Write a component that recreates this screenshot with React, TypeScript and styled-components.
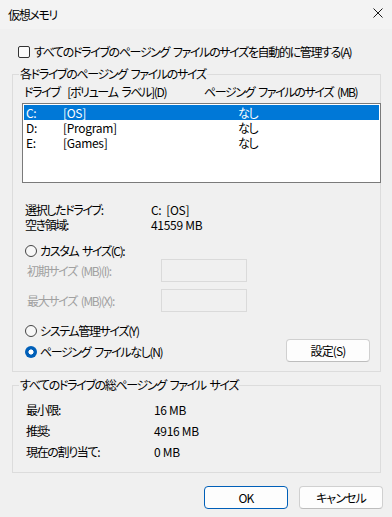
import React from "react"
import styled, { createGlobalStyle } from "styled-components"

const GlobalStyle = createGlobalStyle`
  html, body {
    margin: 0;
    padding: 0;
    background: #f0f0f0;
  }
  body {
    font-family: "Noto Sans CJK JP", "Noto Sans", sans-serif;
    font-size: 12px;
    color: #000;
  }
`

const drives = [
  { letter: "C:", label: "[OS]", size: "なし", selected: true },
  { letter: "D:", label: "[Program]", size: "なし", selected: false },
  { letter: "E:", label: "[Games]", size: "なし", selected: false },
]

const totals = [
  { label: "最小限:", value: "16 MB" },
  { label: "推奨:", value: "4916 MB" },
  { label: "現在の割り当て:", value: "0 MB" },
]

const CloseIcon = () => (
  <svg width="10" height="10" viewBox="0 0 10 10">
    <path d="M0.5 0.5 L9.5 9.5 M9.5 0.5 L0.5 9.5" stroke="#1a1a1a" strokeWidth="1" />
  </svg>
)

const App = () => {
  return (
    <Window>
      <GlobalStyle />
      <TitleBar>
        <Title>仮想メモリ</Title>
        <CloseButton>
          <CloseIcon />
        </CloseButton>
      </TitleBar>

      <Body>
        <CheckRow>
          <CheckBox />
          <span>すべてのドライブのページング ファイルのサイズを自動的に管理する(A)</span>
        </CheckRow>

        <Group>
          <Legend>各ドライブのページング ファイルのサイズ</Legend>
          <HeaderRow>
            <span>ドライブ&nbsp; [ボリューム ラベル](D)</span>
            <span>ページング ファイルのサイズ (MB)</span>
          </HeaderRow>
          <ListBox>
            {drives.map((d) => (
              <ListRow key={d.letter} $selected={d.selected}>
                <Latin>{d.letter}</Latin>
                <Latin>{d.label}</Latin>
                <span>{d.size}</span>
              </ListRow>
            ))}
          </ListBox>

          <InfoBlock>
            <InfoRow>
              <span>選択したドライブ:</span>
              <Latin>C:&nbsp; [OS]</Latin>
            </InfoRow>
            <InfoRow>
              <span>空き領域:</span>
              <Latin>41559 MB</Latin>
            </InfoRow>
          </InfoBlock>

          <RadioRow $top={11}>
            <Radio />
            <span>カスタム サイズ(C):</span>
          </RadioRow>
          <SizeRow $top={0}>
            <DisabledLabel>初期サイズ (MB)(I):</DisabledLabel>
            <SizeInput />
          </SizeRow>
          <SizeRow $top={7}>
            <DisabledLabel>最大サイズ (MB)(X):</DisabledLabel>
            <SizeInput />
          </SizeRow>

          <RadioRow $top={11}>
            <Radio />
            <span>システム管理サイズ(Y)</span>
          </RadioRow>
          <BottomRow>
            <RadioRow $top={2}>
              <Radio $checked />
              <span>ページング ファイルなし(N)</span>
            </RadioRow>
            <Button>設定(S)</Button>
          </BottomRow>
        </Group>

        <Group $top={5} $bottom={10}>
          <Legend>すべてのドライブの総ページング ファイル サイズ</Legend>
          <Totals>
            {totals.map((t) => (
              <TotalRow key={t.label}>
                <span>{t.label}</span>
                <Latin>{t.value}</Latin>
              </TotalRow>
            ))}
          </Totals>
        </Group>

        <ButtonRow>
          <Button $primary>OK</Button>
          <Button>キャンセル</Button>
        </ButtonRow>
      </Body>
    </Window>
  )
}

export default App

const Window = styled.div`
  width: 392px;
  height: 517px;
  background: #f0f0f0;
  display: flex;
  flex-direction: column;
  overflow: hidden;
  font-feature-settings: "palt";
  letter-spacing: -1.35px;
  word-spacing: 2.5px;
  white-space: nowrap;
`

const Latin = styled.span`
  letter-spacing: -0.3px;
  word-spacing: 0;
`

const TitleBar = styled.div`
  height: 29px;
  flex: none;
  display: flex;
  align-items: center;
  justify-content: space-between;
  padding-left: 8px;
  background: #f3f3f3;
`

const Title = styled.div`
  line-height: 16px;
  padding-top: 1px;
`

const CloseButton = styled.div`
  width: 46px;
  height: 29px;
  display: flex;
  align-items: center;
  justify-content: center;
  padding-left: 18px;
  padding-bottom: 3px;
  box-sizing: border-box;
`

const Body = styled.div`
  padding: 0 11px 0 12px;
  display: flex;
  flex-direction: column;
`

const CheckRow = styled.label`
  margin-top: 15px;
  padding-left: 6px;
  height: 16px;
  line-height: 16px;
  display: flex;
  align-items: center;
  gap: 4px;
`

const CheckBox = styled.span`
  width: 12px;
  height: 12px;
  box-sizing: border-box;
  border: 1px solid #333;
  border-radius: 2px;
  background: #fbfbfb;
  flex: none;
`

const Group = styled.fieldset<{ $top?: number; $bottom?: number }>`
  margin: ${(p) => p.$top ?? 6}px 0 0 0;
  padding: 2px 0 ${(p) => p.$bottom ?? 9}px 9px;
  border: 1px solid #dcdcdc;
  min-width: 0;
  display: flex;
  flex-direction: column;
`

const Legend = styled.legend`
  margin-left: -3px;
  padding: 0 1px;
  line-height: 16px;
  height: 16px;
`

const HeaderRow = styled.div`
  display: grid;
  grid-template-columns: 180px 1fr;
  padding-left: 2px;
  line-height: 16px;
`

const ListBox = styled.div`
  margin-top: 3px;
  margin-right: -1px;
  height: 80px;
  box-sizing: border-box;
  border: 1px solid #7a7a7a;
  background: #fff;
  padding: 1px;
  display: flex;
  flex-direction: column;
`

const ListRow = styled.div<{ $selected?: boolean }>`
  display: grid;
  grid-template-columns: 37px 175px 1fr;
  height: 15px;
  line-height: 15px;
  padding-left: 2px;
  background: ${(p) => (p.$selected ? "#0078d7" : "transparent")};
  color: ${(p) => (p.$selected ? "#fff" : "#000")};
`

const InfoBlock = styled.div`
  margin-top: 19px;
  padding-left: 3px;
  display: flex;
  flex-direction: column;
`

const InfoRow = styled.div`
  display: grid;
  grid-template-columns: 126px 1fr;
  line-height: 15px;
`

const RadioRow = styled.label<{ $top: number }>`
  margin-top: ${(p) => p.$top}px;
  padding-left: 3px;
  height: 16px;
  line-height: 16px;
  display: flex;
  align-items: center;
  gap: 3px;
`

const Radio = styled.span<{ $checked?: boolean }>`
  width: 12px;
  height: 12px;
  box-sizing: border-box;
  border-radius: 50%;
  flex: none;
  border: ${(p) => (p.$checked ? "none" : "1px solid #444")};
  background: ${(p) =>
    p.$checked
      ? "radial-gradient(circle, #fff 0 2.3px, #005fb8 2.8px)"
      : "#f7f7f7"};
`

const SizeRow = styled.div<{ $top: number }>`
  margin-top: ${(p) => p.$top}px;
  padding-left: 5px;
  height: 23px;
  display: grid;
  grid-template-columns: 134px 86px;
  align-items: center;
`

const DisabledLabel = styled.span`
  color: #a0a0a0;
  line-height: 16px;
`

const SizeInput = styled.div`
  height: 23px;
  box-sizing: border-box;
  border: 1px solid #dadada;
  background: #f0f0f0;
`

const BottomRow = styled.div`
  display: flex;
  align-items: center;
  justify-content: space-between;
  height: 23px;
  padding-right: 10px;
`

const Button = styled.button<{ $primary?: boolean }>`
  width: 84px;
  height: 23px;
  box-sizing: border-box;
  font-family: inherit;
  font-size: 12px;
  font-feature-settings: "palt";
  letter-spacing: -0.9px;
  line-height: 16px;
  color: #000;
  background: #fdfdfd;
  border: 1px solid ${(p) => (p.$primary ? "#005fb8" : "#d0d0d0")};
  border-bottom-color: ${(p) => (p.$primary ? "#005fb8" : "#bdbdbd")};
  border-radius: 4px;
  padding: 0;
  cursor: pointer;
`

const Totals = styled.div`
  padding-top: 4px;
  padding-left: 4px;
  display: flex;
  flex-direction: column;
`

const TotalRow = styled.div`
  display: grid;
  grid-template-columns: 128px 1fr;
  line-height: 21px;
`

const ButtonRow = styled.div`
  margin-top: 13px;
  margin-right: -2px;
  display: flex;
  justify-content: flex-end;
  gap: 11px;
`
